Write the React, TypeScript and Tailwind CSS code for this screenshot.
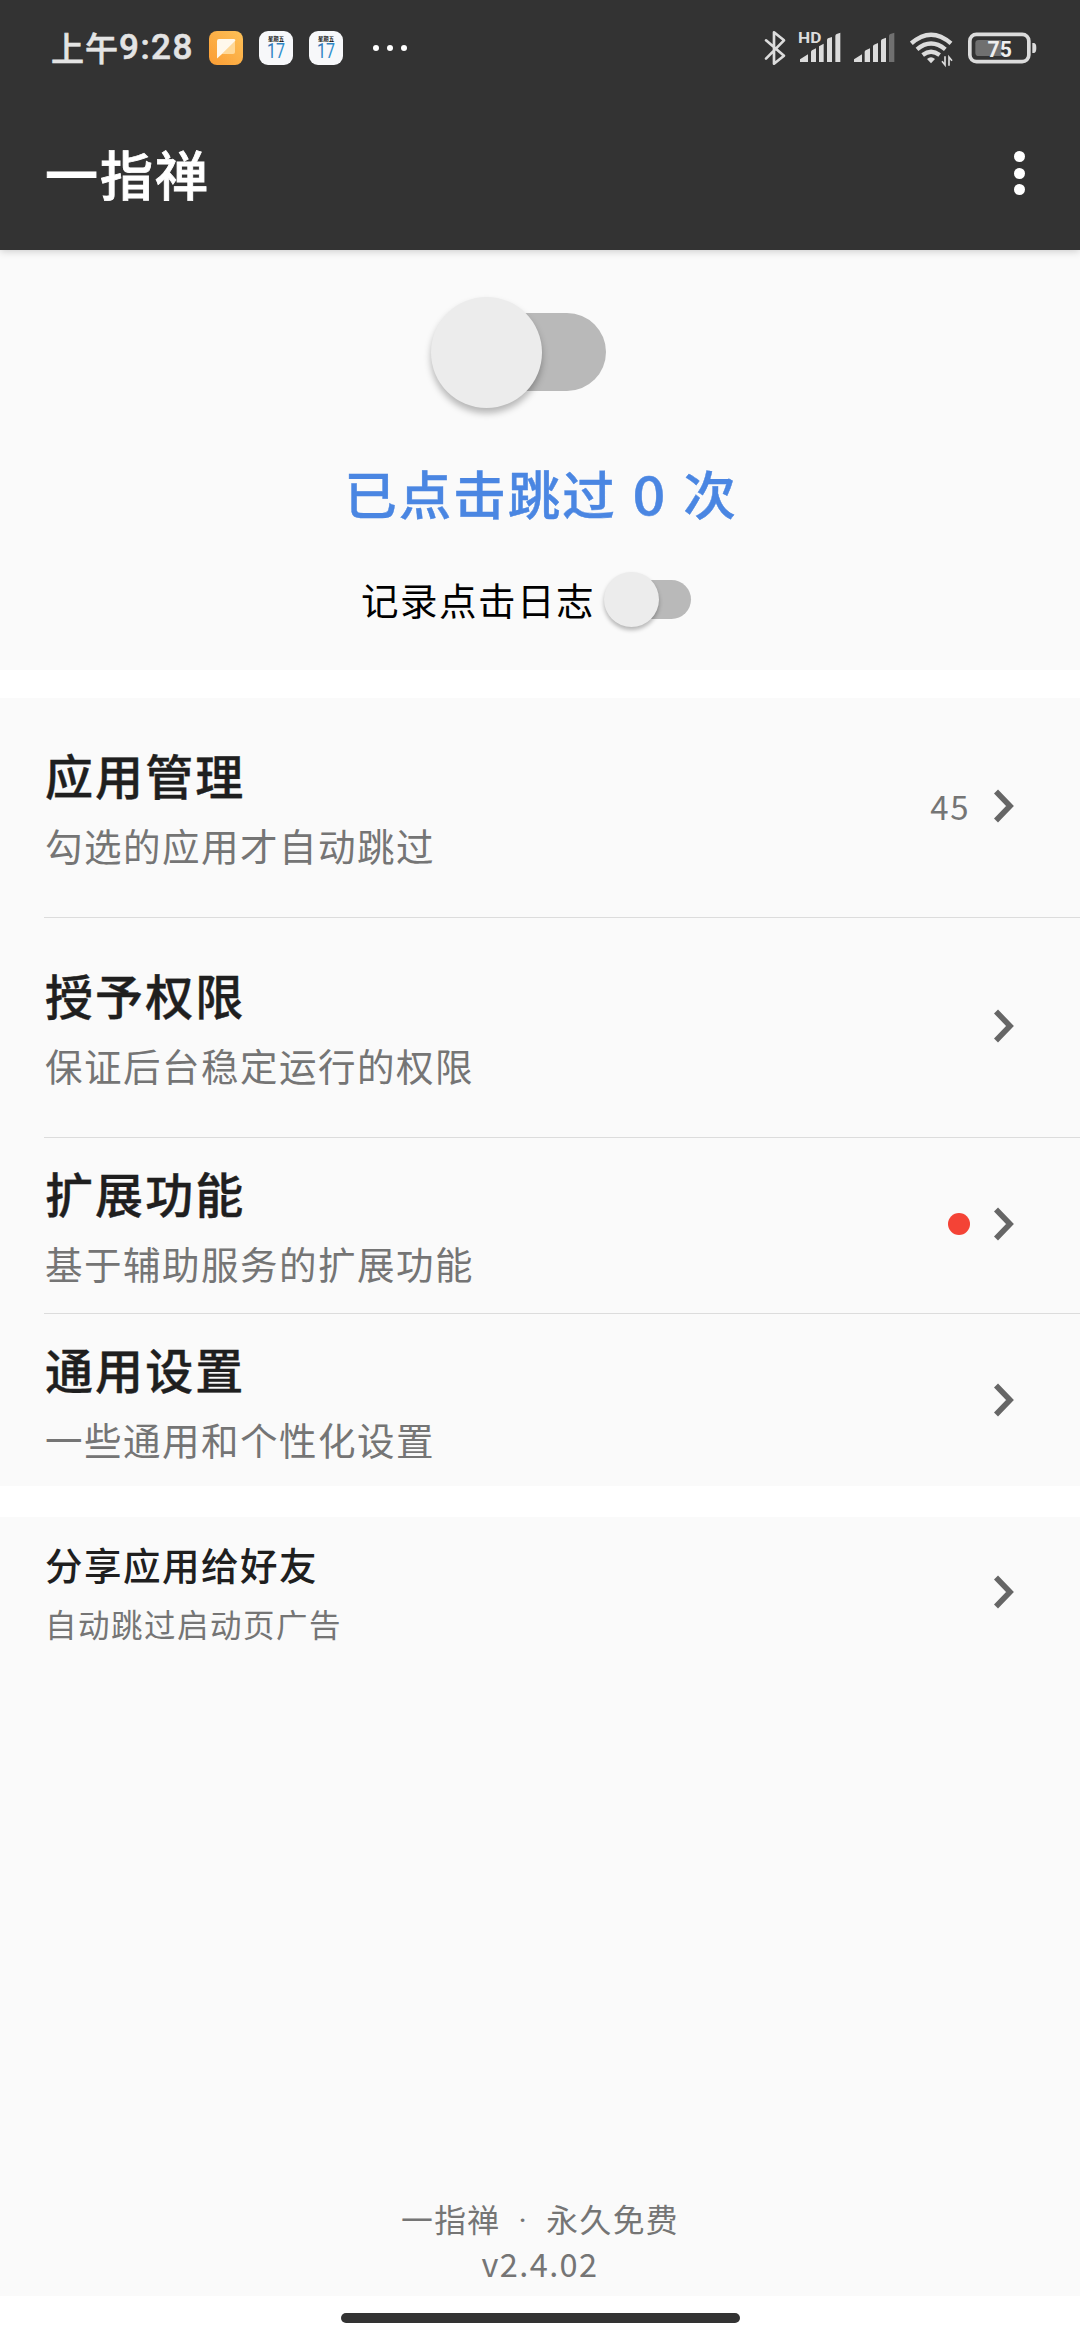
import React from 'react';

const CJK = "font-['Noto_Sans_CJK_SC',sans-serif]";

function CalendarIcon() {
  return (
    <svg width="34" height="34" viewBox="0 0 34 34">
      <defs>
        <linearGradient id="cal" x1="0" y1="0" x2="1" y2="1">
          <stop offset="0" stopColor="#2c6cb0" />
          <stop offset="1" stopColor="#2fa0dc" />
        </linearGradient>
      </defs>
      <rect width="34" height="34" rx="9" fill="#f7f8fa" />
      <text x="17" y="9.6" textAnchor="middle" fontSize="5.4" fontWeight="700" fill="#111" fontFamily="Noto Sans CJK SC, sans-serif">星期五</text>
      <text x="17" y="27" textAnchor="middle" fontSize="19.5" fill="url(#cal)" fontFamily="Roboto, sans-serif" textLength="18" lengthAdjust="spacingAndGlyphs">17</text>
    </svg>
  );
}

function StatusBar() {
  return (
    <div className="flex h-24 items-center justify-between pr-[43px] pl-[51px]">
      <div className="flex h-full items-center">
        <div className="flex w-[142px] items-center whitespace-nowrap text-[#e4e4e4] [-webkit-text-stroke:0.6px_#e4e4e4]">
          <span className="text-[33px] font-medium tracking-[1px]">上午</span>
          <span className="font-['Roboto',sans-serif] text-[35px] leading-[40px] font-medium tracking-[1.5px]">9:28</span>
        </div>
        <div className="ml-4 flex gap-4">
          <svg width="34" height="34" viewBox="0 0 34 34">
            <defs>
              <linearGradient id="note" x1="0" y1="1" x2="1" y2="0">
                <stop offset="0" stopColor="#fb9d34" />
                <stop offset="1" stopColor="#fdc158" />
              </linearGradient>
            </defs>
            <rect width="34" height="34" rx="8" fill="url(#note)" />
            <path d="M26 9V21Q26 23 24 23H13L26 9Z" fill="#ffd897" />
            <path d="M8 10Q8 8 10 8H25Q26.6 8 26.4 9.5L13 23L8 27.5Z" fill="#fff8ec" />
          </svg>
          <CalendarIcon />
          <CalendarIcon />
        </div>
        <div className="ml-[30px] flex gap-2">
          <i className="size-1.5 rounded-full bg-white" />
          <i className="size-1.5 rounded-full bg-white" />
          <i className="size-1.5 rounded-full bg-white" />
        </div>
      </div>

      <div className="flex h-full items-center">
        <svg width="22" height="40" viewBox="71 84 66 120" fill="none" stroke="#dcdcdc" strokeWidth="8" strokeLinejoin="round" strokeLinecap="round">
          <path d="M77 121L131 167L101 191V97L131 121L77 176" />
        </svg>
        <svg className="ml-3" width="43" height="40" viewBox="171 84 129 120" fill="#dcdcdc">
          <text x="171" y="129" fontSize="46" fontWeight="700" fontFamily="Roboto, sans-serif" textLength="70" lengthAdjust="spacingAndGlyphs">HD</text>
          <path d="M177 186V178L201 163V186Z M210 186V156Q210 153 213 151L225 145V186Z M234 186V139L248 131V186Z M258 186V120Q258 117 261 115L273 111V186Z M283 186V108Q283 104 287 102L298 98V186Z" />
        </svg>
        <svg className="ml-3" width="43" height="40" viewBox="336 84 129 120" fill="#dcdcdc">
          <path d="M339 186V178L363 163V186Z M371 186V156Q371 153 374 151L387 145V186Z M396 186V139Q396 136 399 134L411 129V186Z M420 186V123Q420 120 423 118L435 113V186Z" />
          <path d="M444 186V108Q444 104 448 102L460 98V186Z" fill="#707070" />
        </svg>
        <svg className="ml-3.5" width="44" height="40" viewBox="507 84 132 120" fill="none" stroke="#dcdcdc" strokeWidth="13">
          <path d="M511 130Q570 78 630 130" />
          <path d="M528 148Q570 113 613 148" />
          <path d="M545 165Q570 146 596 165" />
          <path d="M558 177Q570 166 582 177L570 190Z" fill="#dcdcdc" stroke="none" />
          <path d="M612 169V195L603 184M624 197V171L633 182" strokeWidth="5" />
        </svg>
        <svg className="ml-3.5" width="69" height="40" viewBox="680 84 207 120">
          <rect x="685.5" y="103" width="177" height="82" rx="20" fill="none" stroke="#dcdcdc" strokeWidth="11" />
          <path d="M873 129H877Q885 129 885 144Q885 159 877 159H873Z" fill="#dcdcdc" />
          <path d="M712 120H780V168H712Q702 168 702 158V130Q702 120 712 120Z" fill="#707070" />
          <text x="775" y="170" textAnchor="middle" fontSize="68" fontWeight="700" fontFamily="Roboto, sans-serif" fill="#eeeeee" textLength="73" lengthAdjust="spacingAndGlyphs">75</text>
        </svg>
      </div>
    </div>
  );
}

function Chevron() {
  return (
    <svg width="20" height="34" viewBox="0 0 20 34" fill="none" stroke="#666666" strokeWidth="5.6">
      <path d="M2 2.5L16 17L2 31.5" />
    </svg>
  );
}

interface RowProps {
  title: string;
  subtitle: string;
  className: string;
  divider?: boolean;
  small?: boolean;
  extra?: React.ReactNode;
}

function Row({ title, subtitle, className, divider, small, extra }: RowProps) {
  return (
    <div className={`ml-11 flex items-center justify-between pr-[66px] pb-[3px] ${divider ? 'border-b border-[#dcdcdc]' : ''} ${className}`}>
      <div className="pt-[5px] pl-px">
        <div className={small ? 'text-[37.5px] leading-[58px] tracking-[1.5px] font-medium text-[#1f1f1f]' : 'text-[48px] leading-[72px] tracking-[2.1px] font-medium text-[#1f1f1f] [-webkit-text-stroke:0.4px_#1f1f1f]'}>{title}</div>
        <div className={small ? 'text-[31.5px] leading-[60px] tracking-[1.5px] text-[#757575]' : 'text-[37.5px] leading-[70px] tracking-[1.5px] text-[#757575]'}>{subtitle}</div>
      </div>
      <div className="flex items-center gap-6">
        {extra}
        <Chevron />
      </div>
    </div>
  );
}

export default function App() {
  return (
    <div className={`flex h-[2340px] w-[1080px] flex-col overflow-hidden bg-white ${CJK}`}>
      <header className="relative z-10 h-[250px] shrink-0 bg-[#333333] shadow-[0_1px_8px_rgba(0,0,0,0.2)]">
        <StatusBar />
        <div className="flex h-[154px] items-center justify-between pr-[55px] pl-[45px]">
          <h1 className="text-[53px] leading-[80px] font-medium tracking-[2px] text-white [-webkit-text-stroke:0.8px_#ffffff]">一指禅</h1>
          <div className="flex flex-col gap-[5.5px]">
            <i className="size-[11px] rounded-full bg-white" />
            <i className="size-[11px] rounded-full bg-white" />
            <i className="size-[11px] rounded-full bg-white" />
          </div>
        </div>
      </header>

      <section className="flex h-[420px] shrink-0 flex-col items-center bg-[#fafafa] pt-[63px]">
        <div className="relative mr-[28px] h-[78px] w-[160px] rounded-full bg-[#b9b9b9]">
          <div className="absolute top-[-16px] left-[-15px] size-[111px] rounded-full bg-[#ececec] shadow-[0_5px_7px_rgba(0,0,0,0.28)]" />
        </div>
        <div className="mt-[61px] ml-0.5 text-[52.5px] leading-[80px] font-medium tracking-[2px] whitespace-pre text-[#4a86e2] [-webkit-text-stroke:0.4px_#4a86e2]">
          已点击跳过 <span className="mx-[3.5px] inline-block scale-x-110">0</span> 次
        </div>
        <div className="mt-[39px] mr-[28px] flex items-center">
          <span className="text-[37.5px] leading-[56px] tracking-[1.5px] text-black">记录点击日志</span>
          <div className="relative ml-[19px] h-[39px] w-[77px] rounded-full bg-[#b9b9b9]">
            <div className="absolute top-[-8px] left-[-10px] size-[55px] rounded-full bg-[#ececec] shadow-[0_3px_4px_rgba(0,0,0,0.28)]" />
          </div>
        </div>
      </section>

      <section className="mt-7 h-[788px] shrink-0 bg-[#fafafa]">
        <Row className="h-[220px]" divider title="应用管理" subtitle="勾选的应用才自动跳过" extra={<span className="text-[33px] leading-[44px] tracking-[1.5px] text-[#757575]">45</span>} />
        <Row className="h-[220px]" divider title="授予权限" subtitle="保证后台稳定运行的权限" />
        <Row className="h-[176px]" divider title="扩展功能" subtitle="基于辅助服务的扩展功能" extra={<span className="size-[22px] rounded-full bg-[#f44336]" />} />
        <Row className="h-[175px]" title="通用设置" subtitle="一些通用和个性化设置" />
      </section>

      <section className="mt-[31px] flex flex-1 flex-col justify-between bg-[#fafafa]">
        <Row className="h-[152px]" small title="分享应用给好友" subtitle="自动跳过启动页广告" />
        <footer className="pb-3 text-center text-[31.8px] leading-[42px] tracking-[1.4px] text-[#757575]">
          <div>
            一指禅<span className="mx-[18px] font-['Roboto',sans-serif]">·</span>永久免费
          </div>
          <div className="text-[32.5px]">v2.4.02</div>
        </footer>
      </section>

      <div className="flex h-11 shrink-0 justify-center pt-[17px]">
        <div className="h-[10px] w-[399px] rounded-full bg-[#333333]" />
      </div>
    </div>
  );
}
